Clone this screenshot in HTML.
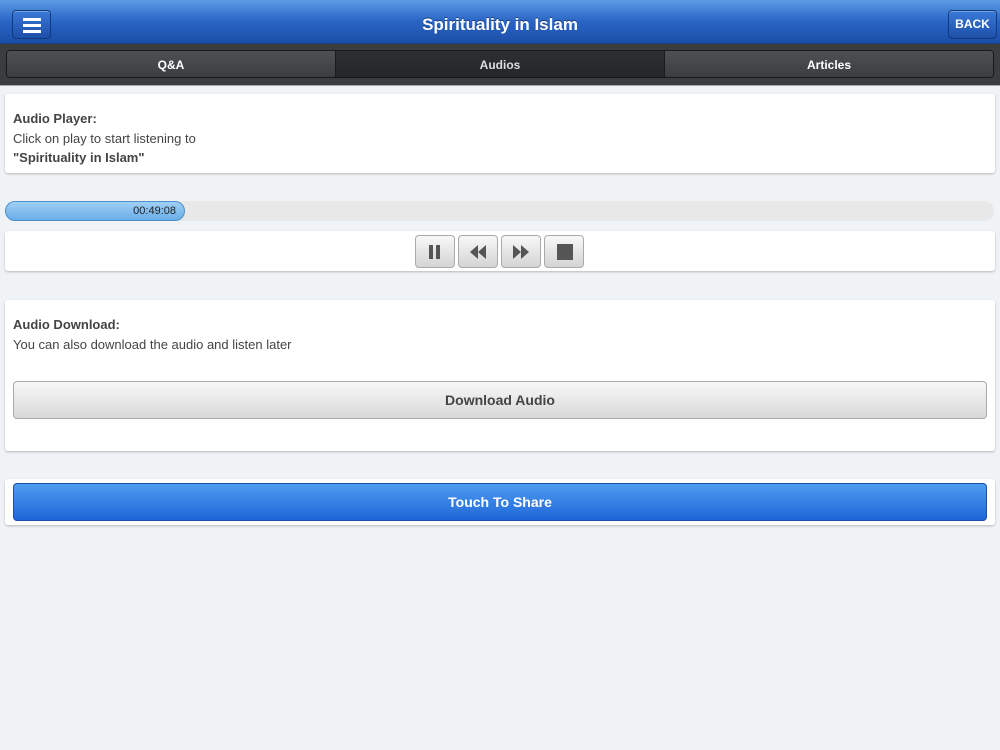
<!DOCTYPE html>
<html><head><style>
*{box-sizing:border-box;margin:0;padding:0}
body{width:1000px;height:750px;background:#f0f3f6;font-family:"Liberation Sans",sans-serif;position:relative;overflow:hidden}
.hdr{position:absolute;left:0;top:0;width:1000px;height:44px;background:linear-gradient(#5b9be6,#2a64c4 50%,#1b4ea8);border-bottom:1px solid #153e85}
.hdr h1{text-align:center;color:#fff;font-size:17px;line-height:50px;font-weight:bold;text-shadow:0 -1px 0 #1a3e80}
.btn{position:absolute;top:10px;height:29px;border:1px solid #13397a;border-radius:4px;background:linear-gradient(#3a7ad8,#1d4fa8);box-shadow:inset 0 1px 0 rgba(255,255,255,.3)}
.nav{position:absolute;top:44px;left:0;width:1000px;height:42px;background:#3a3c3e;border-bottom:1px solid #aaa}
.tabs{position:absolute;left:6px;top:6px;width:988px;height:28px;border:1px solid #1a1a1a;border-radius:4px;display:flex;overflow:hidden}
.tabs div{flex:1;text-align:center;color:#fff;font-size:12px;font-weight:bold;line-height:28px;background:linear-gradient(#4e5153,#3b3e40);border-right:1px solid #1a1a1a}
.tabs div:last-child{border-right:none}
.tabs .on{background:linear-gradient(#2c2e31,#25272a);color:#ddd}
.card{position:absolute;left:5px;width:990px;background:#fff;border-radius:3px;box-shadow:0 1px 2px rgba(0,0,0,.25)}
.t{font-size:13px;color:#444;position:absolute;left:8px}
.pb{width:48px;height:33px;border:1px solid #aaa;border-radius:4px;background:linear-gradient(#f8f8f8,#d4d4d4);display:inline-block;margin-right:3px;position:relative}
</style></head><body>
<div class="hdr"><h1>Spirituality in Islam</h1>
<div class="btn" style="left:12px;width:39px"><div style="position:absolute;left:10px;top:7px;width:18px;height:3px;background:#fff;box-shadow:0 6px 0 #fff,0 12px 0 #fff"></div></div>
<div class="btn" style="left:948px;width:49px;color:#fff;font-weight:bold;font-size:12px;text-align:center;line-height:27px">BACK</div>
</div>
<div class="nav"><div class="tabs"><div>Q&amp;A</div><div class="on">Audios</div><div>Articles</div></div></div>

<div class="card" style="top:94px;height:79px">
<div class="t" style="top:17px;font-weight:bold">Audio Player:</div>
<div class="t" style="top:37px;font-size:13px">Click on play to start listening to</div>
<div class="t" style="top:56px;font-weight:bold">"Spirituality in Islam"</div>
</div>

<div style="position:absolute;left:5px;top:201px;width:989px;height:20px;background:#e8e8e8;border-radius:10px"></div>
<div style="position:absolute;left:5px;top:201px;width:180px;height:20px;background:linear-gradient(#9fd0f5,#6aaee8);border:1px solid #4c8fcc;border-radius:10px;font-size:11px;color:#222;text-align:right;padding-right:8px;line-height:19px">00:49:08</div>

<div class="card" style="top:231px;height:40px">
<div style="position:absolute;left:410px;top:4px;white-space:nowrap">
<div class="pb" style="width:40px"><div style="position:absolute;left:13px;top:9px;width:4px;height:14px;background:#555;box-shadow:7px 0 0 #555"></div></div><div class="pb" style="width:40px"><svg width="40" height="33" style="position:absolute;left:-1px;top:-1px"><path d="M12 17l8-7v14zM20 17l8-7v14z" fill="#555"/></svg></div><div class="pb" style="width:40px"><svg width="40" height="33" style="position:absolute;left:-1px;top:-1px"><path d="M12 10l8 7-8 7zM20 10l8 7-8 7z" fill="#555"/></svg></div><div class="pb" style="width:40px"><div style="position:absolute;left:12px;top:8px;width:16px;height:16px;background:#555"></div></div>
</div></div>

<div class="card" style="top:300px;height:151px">
<div class="t" style="top:17px;font-weight:bold">Audio Download:</div>
<div class="t" style="top:37px;font-size:13px">You can also download the audio and listen later</div>
<div style="position:absolute;left:8px;top:81px;width:974px;height:38px;border:1px solid #aaa;border-radius:4px;background:linear-gradient(#f8f8f8,#d8d8d8);text-align:center;line-height:37px;font-weight:bold;font-size:14px;color:#444">Download Audio</div>
</div>

<div class="card" style="top:479px;height:46px">
<div style="position:absolute;left:8px;top:4px;width:974px;height:38px;border:1px solid #1a50a8;border-radius:4px;background:linear-gradient(#4f9cf0,#1e66d8);text-align:center;line-height:37px;font-weight:bold;font-size:14px;color:#fff">Touch To Share</div>
</div>
</body></html>
